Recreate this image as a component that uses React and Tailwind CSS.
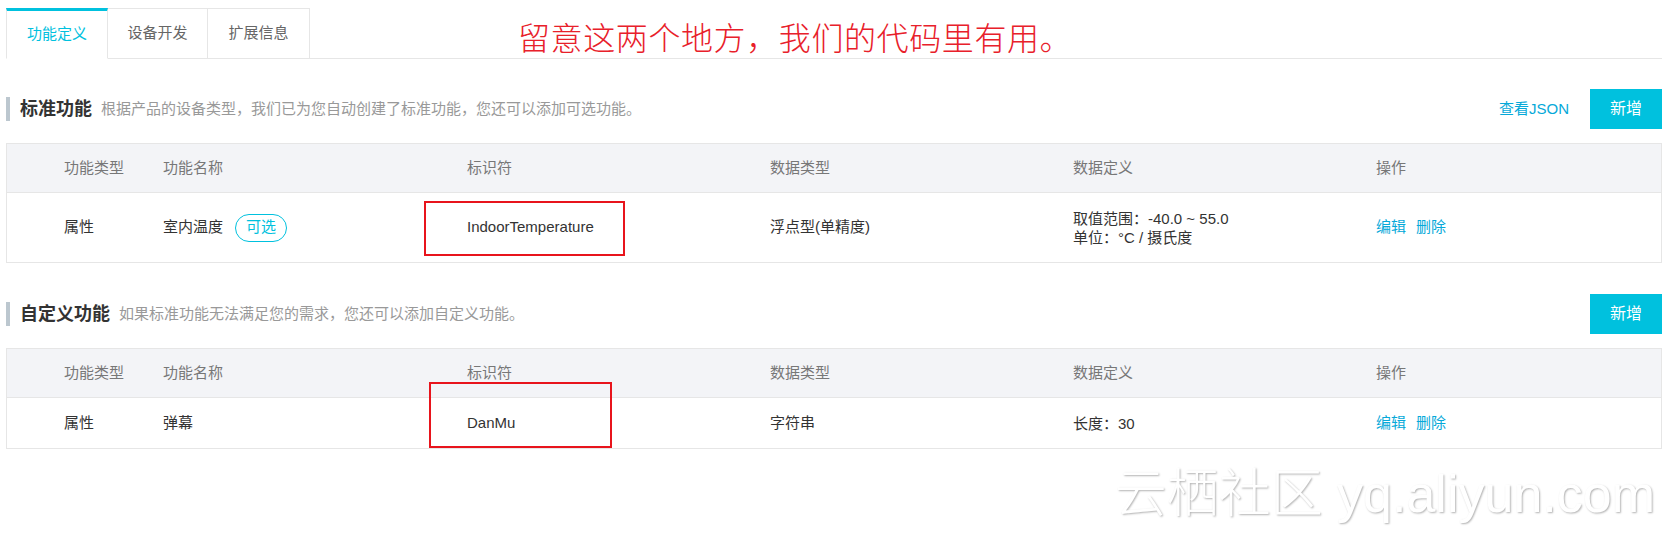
import React from "react";

const cols = "grid grid-cols-[156px_304px_303px_303px_303px_1fr] items-center";
const heads = ["功能类型", "功能名称", "标识符", "数据类型", "数据定义", "操作"];

function Tabs() {
  const tabs = [
    { label: "功能定义", w: "w-[102px]", active: true },
    { label: "设备开发", w: "w-[100px]" },
    { label: "扩展信息", w: "w-[102px]" },
  ];
  return (
    <div className="flex items-end border-b border-[#e6e6e6]">
      {tabs.map((t) => (
        <div
          key={t.label}
          className={
            t.active
              ? `${t.w} -mb-px flex h-[51px] items-center justify-center border border-t-[3px] border-[#e6e6e6] border-t-[#00c1de] border-b-white text-[15px] text-[#00c1de]`
              : `${t.w} -mb-px flex h-[51px] items-center justify-center border border-l-0 border-[#e6e6e6] bg-white text-[15px] text-[#666]`
          }
        >
          {t.label}
        </div>
      ))}
      <div className="mb-[3px] ml-[208px] text-[32px] font-light leading-[32px] tracking-[0.6px] text-[#e8202a]">
        留意这两个地方，我们的代码里有用。
      </div>
    </div>
  );
}

function SectionHead({ title, desc, json }) {
  return (
    <div className="flex items-center justify-between">
      <div className="flex items-center">
        <div className="h-[24px] w-[4px] bg-[#bcc7cf]" />
        <div className="ml-[10px] text-[18px] font-bold text-[#333]">{title}</div>
        <div className="ml-[9px] text-[15px] text-[#999]">{desc}</div>
      </div>
      <div className="flex items-center gap-[21px]">
        {json && <span className="text-[15px] text-[#06a9d9]">查看JSON</span>}
        <button className="h-[40px] w-[72px] bg-[#00c1de] text-[16px] text-white">新增</button>
      </div>
    </div>
  );
}

function Table({ row, rowH }) {
  return (
    <div className="border border-[#e6e6e6] text-[15px]">
      <div className={`${cols} h-[49px] border-b border-[#e6e6e6] bg-[#f3f4f7] text-[#777]`}>
        {heads.map((h, i) => (
          <div key={h} className={i === 0 ? "pl-[57px]" : ""}>
            {h}
          </div>
        ))}
      </div>
      <div className={`${cols} ${rowH} text-[#333]`}>
        <div className="pl-[57px]">属性</div>
        <div className="flex items-center">
          {row.name}
          {row.optional && (
            <span className="ml-[12px] flex h-[28px] items-center rounded-full border border-[#00c1de] px-[10px] text-[#00c1de]">
              可选
            </span>
          )}
        </div>
        <div>{row.id}</div>
        <div>{row.type}</div>
        <div className="leading-[19px]">
          {row.def.map((d) => (
            <div key={d}>{d}</div>
          ))}
        </div>
        <div className="flex gap-[10px] text-[#06a9d9]">
          <span>编辑</span>
          <span>删除</span>
        </div>
      </div>
    </div>
  );
}

export default function App() {
  return (
    <div className="relative h-[535px] w-full overflow-hidden bg-white pl-[6px] pr-[12px] pt-[8px] font-['Liberation_Sans','Noto_Sans_CJK_SC',sans-serif]">
      <Tabs />

      <div className="mt-[30px]">
        <SectionHead
          title="标准功能"
          desc="根据产品的设备类型，我们已为您自动创建了标准功能，您还可以添加可选功能。"
          json
        />
      </div>
      <div className="mt-[14px]">
        <Table
          rowH="h-[69px]"
          row={{
            name: "室内温度",
            optional: true,
            id: "IndoorTemperature",
            type: "浮点型(单精度)",
            def: ["取值范围：-40.0 ~ 55.0", "单位：°C / 摄氏度"],
          }}
        />
      </div>

      <div className="mt-[31px]">
        <SectionHead
          title="自定义功能"
          desc="如果标准功能无法满足您的需求，您还可以添加自定义功能。"
        />
      </div>
      <div className="mt-[14px]">
        <Table
          rowH="h-[50px]"
          row={{ name: "弹幕", id: "DanMu", type: "字符串", def: ["长度：30"] }}
        />
      </div>

      {/* annotation boxes */}
      <div className="absolute left-[424px] top-[201px] h-[55px] w-[201px] border-2 border-[#e8141c]" />
      <div className="absolute left-[429px] top-[382px] h-[66px] w-[183px] border-2 border-[#e8141c]" />

      {/* watermark */}
      <div className="absolute right-[19px] top-[468px] whitespace-nowrap text-[52px] font-light leading-none text-white [text-shadow:1px_1px_2px_rgba(0,0,0,0.3)]">
        云栖社区 yq.aliyun.com
      </div>
    </div>
  );
}
